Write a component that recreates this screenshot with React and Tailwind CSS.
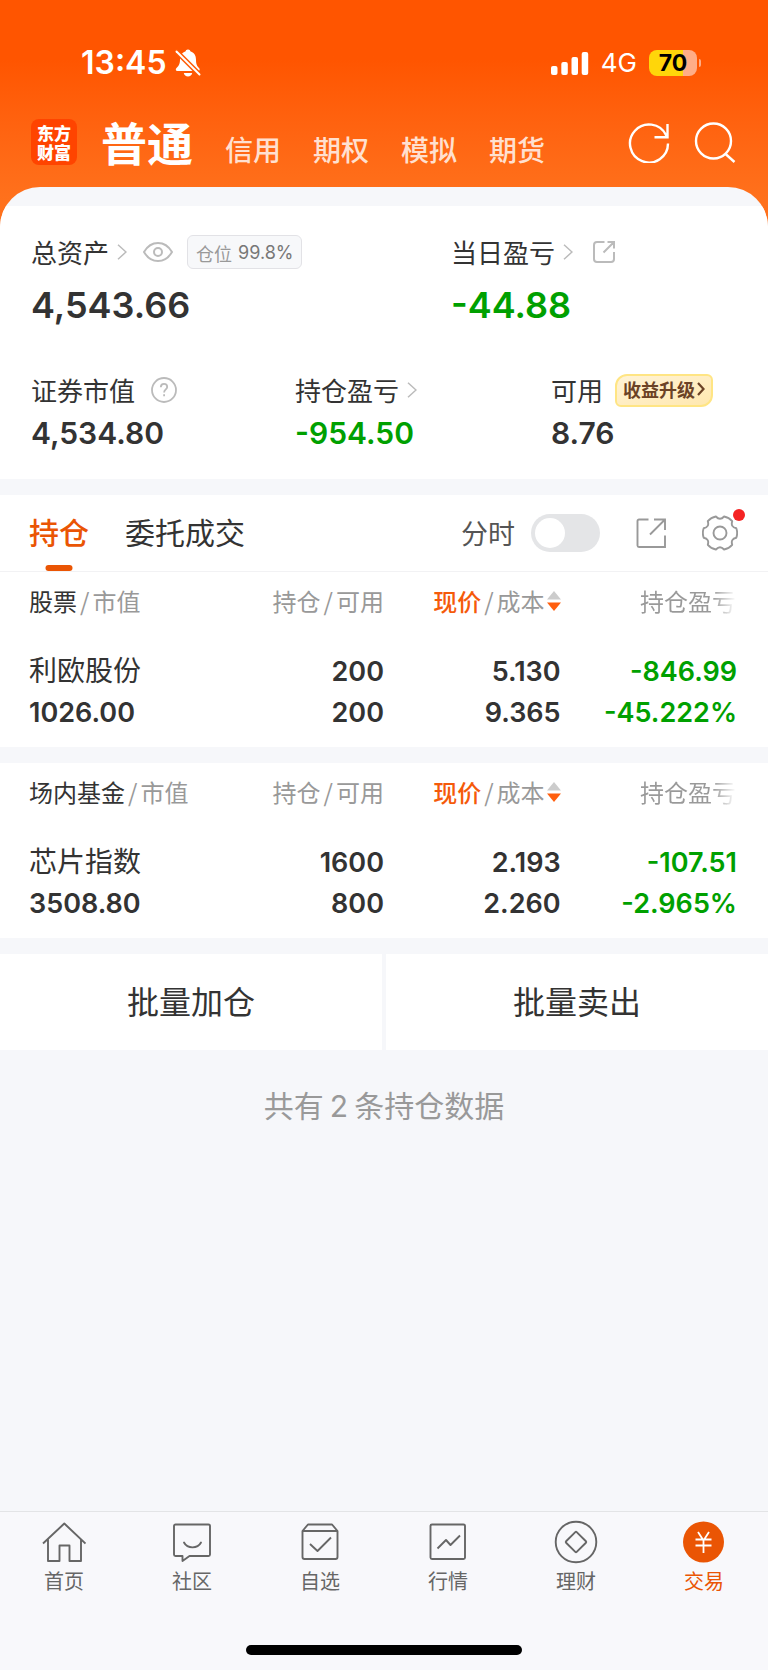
import clsx from 'clsx'

const markets = ['信用', '期权', '模拟', '期货']

const groups = [
  {
    title: '股票',
    rows: [
      { name: '利欧股份', value: '1026.00', held: '200', usable: '200', price: '5.130', cost: '9.365', profit: '-846.99', rate: '-45.222%' },
    ],
  },
  {
    title: '场内基金',
    rows: [
      { name: '芯片指数', value: '3508.80', held: '1600', usable: '800', price: '2.193', cost: '2.260', profit: '-107.51', rate: '-2.965%' },
    ],
  },
]

const HomeIcon = () => (
  <svg viewBox="0 0 44 44" className="size-11" fill="none" stroke="currentColor" strokeWidth="1.9" strokeLinejoin="round">
    <path d="M1 23.5 22.300 3.500 43.500 23.500M6 19v22h11.500V25.500h10V41H39V19" />
  </svg>
)

const ChatIcon = () => (
  <svg viewBox="0 0 44 44" className="size-11" fill="none" stroke="currentColor" strokeWidth="1.9" strokeLinejoin="round" strokeLinecap="round">
    <path d="M5.500 4.500h33a1.500 1.500 0 0 1 1.500 1.500v28.500a1.500 1.500 0 0 1-1.500 1.500H19.500l-7 5v-5H5.500A1.500 1.500 0 0 1 4 34.500V6a1.500 1.500 0 0 1 1.500-1.500Z" />
    <path d="M14 22.500c3.500 6.500 13.500 6.500 17 0" />
  </svg>
)

const BoxIcon = () => (
  <svg viewBox="0 0 44 44" className="size-11" fill="none" stroke="currentColor" strokeWidth="1.9" strokeLinejoin="round">
    <path d="M4.500 11v26a2 2 0 0 0 2 2h31a2 2 0 0 0 2-2V11l-5.500-6.500H10L4.500 11Zm0 0h35" />
    <path d="m12 24 7.500 7L33 17.500" />
  </svg>
)

const TrendIcon = () => (
  <svg viewBox="0 0 44 44" className="size-11" fill="none" stroke="currentColor" strokeWidth="1.9" strokeLinejoin="round">
    <rect x="4.500" y="4.500" width="34.500" height="34.500" rx="1.500" />
    <path d="m11.500 28.500 8.500-8.500 4.500 5 9.500-9.500" />
  </svg>
)

const DiamondIcon = () => (
  <svg viewBox="0 0 44 44" className="size-11" fill="none" stroke="currentColor" strokeWidth="1.9" strokeLinejoin="round">
    <circle cx="22" cy="22" r="20.300" />
    <rect x="14.500" y="14.500" width="15" height="15" rx="1" transform="rotate(45 22 22)" />
  </svg>
)

const YuanIcon = () => (
  <svg viewBox="0 0 44 44" className="size-11" fill="none">
    <circle cx="21.500" cy="22" r="20.500" fill="#ea5504" />
    <path d="m16 12 5.500 8.500L27 12M21.500 20.500V33M13.500 19.500h16M13.500 25.500h16" stroke="#fff" strokeWidth="1.8" />
  </svg>
)

const tabs = [
  { label: '首页', icon: HomeIcon },
  { label: '社区', icon: ChatIcon },
  { label: '自选', icon: BoxIcon },
  { label: '行情', icon: TrendIcon },
  { label: '理财', icon: DiamondIcon },
  { label: '交易', icon: YuanIcon, active: true },
]

const Chevron = () => (
  <svg viewBox="0 0 10 16" className="h-4 w-[10px]" fill="none" stroke="#bbb" strokeWidth="1.5">
    <path d="m1 .7 8 7.300-8 7.300" />
  </svg>
)

const StatusBar = () => (
  <div className="flex h-[50px] items-center justify-between pr-[67px] pl-[81px] font-['Inter',sans-serif]">
    <div className="flex items-center gap-2">
      <span className="text-[32px] leading-8 font-semibold">13:45</span>
      <svg viewBox="0 0 26 28" className="h-7 w-[26px]">
        <path fill="#fff" d="M13 .5a2.600 2.600 0 0 1 2.600 2c3.800 1.200 5.400 4.300 5.400 8 0 5 1.200 6.800 3.200 8.700.8.900.6 2.800-1 2.800H2.300c-1.600 0-1.900-1.900-1-2.800C3.300 17.300 5 15.500 5 10.500c0-3.700 1.700-6.800 5.400-8A2.600 2.600 0 0 1 13 .5ZM8.800 24h8.400c-.4 2-2 3.500-4.200 3.500S9.200 26 8.800 24Z" />
        <path stroke="#ff5a03" strokeWidth="5" d="M0 1 26 27" />
        <path stroke="#fff" strokeWidth="2" strokeLinecap="round" d="M1.500 2.500 24.500 25.500" />
      </svg>
    </div>
    <div className="flex items-center">
      <svg viewBox="0 0 38 24" className="mr-3 h-6 w-[38px]" fill="#fff">
        <rect x="0" y="15" width="6.500" height="9" rx="2" />
        <rect x="10.300" y="11" width="6.500" height="13" rx="2" />
        <rect x="20.500" y="6" width="6.500" height="18" rx="2" />
        <rect x="30.700" y="1" width="6.500" height="23" rx="2" />
      </svg>
      <span className="mr-3 text-[26px] leading-8">4G</span>
      <span className="flex h-[26px] w-12 items-center justify-center rounded-lg bg-linear-to-r from-[#ffd60a] from-71% to-[#ffad87] to-71% text-[23px] leading-6 font-bold text-black">
        70
      </span>
      <span className="ml-[2px] h-2 w-[2px] rounded-r bg-[#ffad87]" />
    </div>
  </div>
)

const Header = () => (
  <header className="flex items-center justify-between pt-6 pr-8 pb-4 pl-[31px]">
    <div className="flex items-center">
      <div className="flex size-[46px] items-center justify-center rounded-lg bg-[#ff4400]">
        <span className="w-[34px] text-center text-[17px] leading-[19px] font-black break-all">东方财富</span>
      </div>
      <nav className="ml-6 flex items-baseline gap-8">
        <a href="#normal" className="text-[46px] leading-[59px] font-bold">普通</a>
        {markets.map((name) => (
          <a key={name} href={`#${name}`} className="text-[28px] leading-9 font-medium text-[#ffe0d0]">{name}</a>
        ))}
      </nav>
    </div>
    <div className="flex items-center gap-6">
      <button aria-label="刷新">
        <svg viewBox="0 0 42 42" className="size-[42px]" fill="none" stroke="#fff" strokeWidth="2.400">
          <path d="M40 22.500a19 19 0 1 1-2-8.500l1 2M39.500 3v13.300H26.500" />
        </svg>
      </button>
      <button aria-label="搜索">
        <svg viewBox="0 0 42 42" className="size-[42px]" fill="none" stroke="#fff" strokeWidth="2.400">
          <circle cx="19.500" cy="20" r="17.500" />
          <path d="M31 32.500 40.500 41" />
        </svg>
      </button>
    </div>
  </header>
)

const Summary = () => (
  <section className="bg-white pt-6 pr-8 pb-7 pl-[31px]">
    <div className="flex">
      <div className="w-[420px]">
        <div className="flex h-11 items-center">
          <span className="text-[26px] leading-9">总资产</span>
          <span className="ml-2"><Chevron /></span>
          <svg viewBox="0 0 30 20" className="ml-4 h-5 w-[30px]" fill="none" stroke="#bbb" strokeWidth="2">
            <path d="M1 10C4.500 4 9.500 1 15 1s10.500 3 14 9c-3.500 6-8.500 9-14 9S4.500 16 1 10Z" />
            <circle cx="15" cy="10" r="4" />
          </svg>
          <span className="ml-[14px] flex h-[34px] items-center gap-[6px] rounded-md border border-[#e2e2e6] bg-[#f7f8fa] px-2 pt-[2px] text-[18px] leading-6 text-[#999]">
            仓位 <span className="font-['Inter',sans-serif] text-[#777]">99.8%</span>
          </span>
        </div>
        <p className="mt-[11px] font-['Inter',sans-serif] text-[36px] leading-10 font-semibold">4,543.66</p>
      </div>
      <div>
        <div className="flex h-11 items-center">
          <span className="text-[26px] leading-9">当日盈亏</span>
          <span className="ml-2"><Chevron /></span>
          <svg viewBox="0 0 22 22" className="ml-5 size-[22px]" fill="none" stroke="#bbb" strokeWidth="2">
            <path d="M11.500 1H4a3 3 0 0 0-3 3v14a3 3 0 0 0 3 3h14a3 3 0 0 0 3-3v-7M10.500 11.500 20.500 1.500M14.500 1H21v6.500" />
          </svg>
        </div>
        <p className="mt-[11px] font-['Inter',sans-serif] text-[36px] leading-10 font-semibold text-[#00a000]">-44.88</p>
      </div>
    </div>

    <div className="mt-[43px] flex">
      <div className="w-[264px]">
        <div className="flex h-11 items-center gap-4">
          <span className="text-[26px] leading-9">证券市值</span>
          <svg viewBox="0 0 26 26" className="size-[26px]" fill="none" stroke="#bbb" strokeWidth="1.800">
            <circle cx="13" cy="13" r="12" />
            <path d="M9.800 10.200c0-2 1.300-3.400 3.200-3.400s3.200 1.300 3.200 3.100c0 2.400-3.100 2.600-3.100 5.600M13.100 17.300v2" />
          </svg>
        </div>
        <p className="mt-[3px] font-['Inter',sans-serif] text-[30px] leading-9 font-semibold">4,534.80</p>
      </div>
      <div className="w-64">
        <div className="flex h-11 items-center gap-2">
          <span className="text-[26px] leading-9">持仓盈亏</span>
          <Chevron />
        </div>
        <p className="mt-[3px] font-['Inter',sans-serif] text-[30px] leading-9 font-semibold text-[#00a000]">-954.50</p>
      </div>
      <div>
        <div className="flex h-11 items-center gap-3">
          <span className="text-[26px] leading-9">可用</span>
          <button className="flex h-[33px] items-center gap-[2px] rounded-tl-xl rounded-tr-md rounded-br-xl rounded-bl-md border-2 border-[#ffe584] bg-linear-to-br from-[#fff3d6] to-[#ffe8b0] px-[6px] pb-[2px] text-[18px] leading-6 font-bold text-[#6b4226]">
            收益升级
            <svg viewBox="0 0 8 14" className="h-[14px] w-2" fill="none" stroke="#6b4226" strokeWidth="2.200">
              <path d="m1 1 5.500 6L1 13" />
            </svg>
          </button>
        </div>
        <p className="mt-[3px] font-['Inter',sans-serif] text-[30px] leading-9 font-semibold">8.76</p>
      </div>
    </div>
  </section>
)

const Toolbar = () => (
  <div className="flex h-[77px] items-center justify-between border-b border-[#f2f2f4] bg-white pr-[30px] pl-[29px]">
    <div className="flex h-full gap-9 text-[30px] leading-10">
      <button className="relative pb-1 font-medium text-[#ea5504]">
        持仓
        <span className="absolute bottom-0 left-1/2 h-[6px] w-[27px] -translate-x-1/2 rounded-full bg-[#ea5504]" />
      </button>
      <button className="pb-1">委托成交</button>
    </div>
    <div className="flex items-center">
      <label className="flex items-center gap-4 text-[27px] leading-9 text-[#555]">
        分时
        <input
          type="checkbox"
          role="switch"
          className="h-[38px] w-[69px] appearance-none rounded-full bg-[#e4e5e7] p-1 before:block before:size-[30px] before:rounded-full before:bg-white checked:bg-[#ea5504] checked:before:ml-auto"
        />
      </label>
      <button aria-label="分享" className="ml-9">
        <svg viewBox="0 0 32 32" className="size-8" fill="none" stroke="#999" strokeWidth="1.900">
          <path d="M12.500 2.500H3A1.500 1.500 0 0 0 1.500 4v24.500A1.500 1.500 0 0 0 3 30h26V18.500M14 17.500 28.500 3M18 2.500h11V13" />
        </svg>
      </button>
      <button aria-label="设置" className="relative ml-[34px]">
        <svg viewBox="0 0 36 36" className="size-9" fill="none" stroke="#999" strokeWidth="1.900" strokeLinejoin="round">
          <path d="M34.300 13.300Q36 18 34.300 22.700 28.400 24 30.200 29.800 27 33.500 22.100 34.500 18 30 13.900 34.500 9 33.500 5.800 29.800 7.600 24 1.700 22.700 0 18 1.700 13.300 7.600 12 5.800 6.200 9 2.500 13.900 1.500 18 6 22.100 1.500 27 2.500 30.200 6.200 28.400 12 34.300 13.300Z" />
          <circle cx="18" cy="18" r="6.500" />
        </svg>
        <span className="absolute -top-[6px] -right-[7px] size-3 rounded-full bg-[#f52323]" />
      </button>
    </div>
  </div>
)

const Slash = () => <span className="px-[3px] text-[#999]">/</span>

const HoldingTable = ({ title, rows }) => (
  <table className="w-full table-fixed bg-white text-right">
    <thead>
      <tr className="h-16 text-[24px] leading-8 text-[#999]">
        <th className="w-[31%] pb-[6px] pl-[29px] text-left font-normal"><span className="text-[#333]">{title}</span><Slash />市值</th>
        <th className="w-[19%] pb-[6px] font-normal">持仓<Slash />可用</th>
        <th className="w-[23%] pb-[6px] font-normal">
          <button className="inline-flex items-center">
            <span className="font-medium text-[#f55a0a]">现价</span><Slash />成本
            <svg viewBox="0 0 14 20" className="ml-[2px] h-5 w-[14px]">
              <path d="M7 0 14 8.500H0Z" fill="#ccc" />
              <path d="M7 20 0 11.500h14Z" fill="#ff5f0f" />
            </svg>
          </button>
        </th>
        <th className="pr-8 pb-[6px] font-normal">
          <span className="bg-linear-to-r from-[#999] from-75% to-white bg-clip-text text-transparent">持仓盈亏</span>
        </th>
      </tr>
    </thead>
    <tbody>
      {rows.map((row) => (
        <tr key={row.name} className="h-[111px] font-['Inter','Noto_Sans_CJK_SC',sans-serif] text-[27px] leading-[41px] font-semibold">
          <td className="pl-[29px] text-left">
            <p className="text-[28px] font-normal">{row.name}</p>
            <p>{row.value}</p>
          </td>
          <td><p>{row.held}</p><p>{row.usable}</p></td>
          <td><p>{row.price}</p><p>{row.cost}</p></td>
          <td className="pr-[31px] text-[#00a000]"><p>{row.profit}</p><p>{row.rate}</p></td>
        </tr>
      ))}
    </tbody>
  </table>
)

const TabBar = () => (
  <nav className="mt-auto border-t border-[#e3e4e6] bg-[#f8f8fb] pt-2">
    <div className="grid grid-cols-6">
      {tabs.map(({ label, icon: Icon, active }) => (
        <a key={label} href={`#${label}`} className={clsx('flex flex-col items-center gap-[3px] text-[20px] leading-7', active ? 'text-[#ea5504]' : 'text-[#666]')}>
          <Icon />
          {label}
        </a>
      ))}
    </div>
    <div className="mx-auto mt-[50px] mb-[15px] h-[10px] w-9/25 rounded-full bg-black" />
  </nav>
)

export default function App() {
  return (
    <div className="flex min-h-screen flex-col bg-[#f6f7fa] font-['Noto_Sans_CJK_SC',sans-serif] text-[#333]">
      <div className="bg-linear-to-b from-[#ff5500] from-[60px] to-[#ff711c] to-[200px] pt-[38px]">
        <div className="text-white">
          <StatusBar />
          <Header />
        </div>
        <div className="overflow-hidden rounded-t-[40px] bg-[#f6f7fa] pt-[19px]">
          <Summary />
        </div>
      </div>
      <div className="mt-4">
        <Toolbar />
        <div className="flex flex-col gap-4">
          {groups.map((group) => (
            <HoldingTable key={group.title} {...group} />
          ))}
        </div>
      </div>
      <div className="mt-4 grid grid-cols-2 gap-1 text-[32px] leading-10">
        <button className="h-24 bg-white pb-1">批量加仓</button>
        <button className="h-24 bg-white pb-1">批量卖出</button>
      </div>
      <p className="mt-[34px] text-center text-[30px] leading-10 text-[#999]">
        共有<span className="px-[6px] font-['Inter',sans-serif]">2</span>条持仓数据
      </p>
      <TabBar />
    </div>
  )
}
